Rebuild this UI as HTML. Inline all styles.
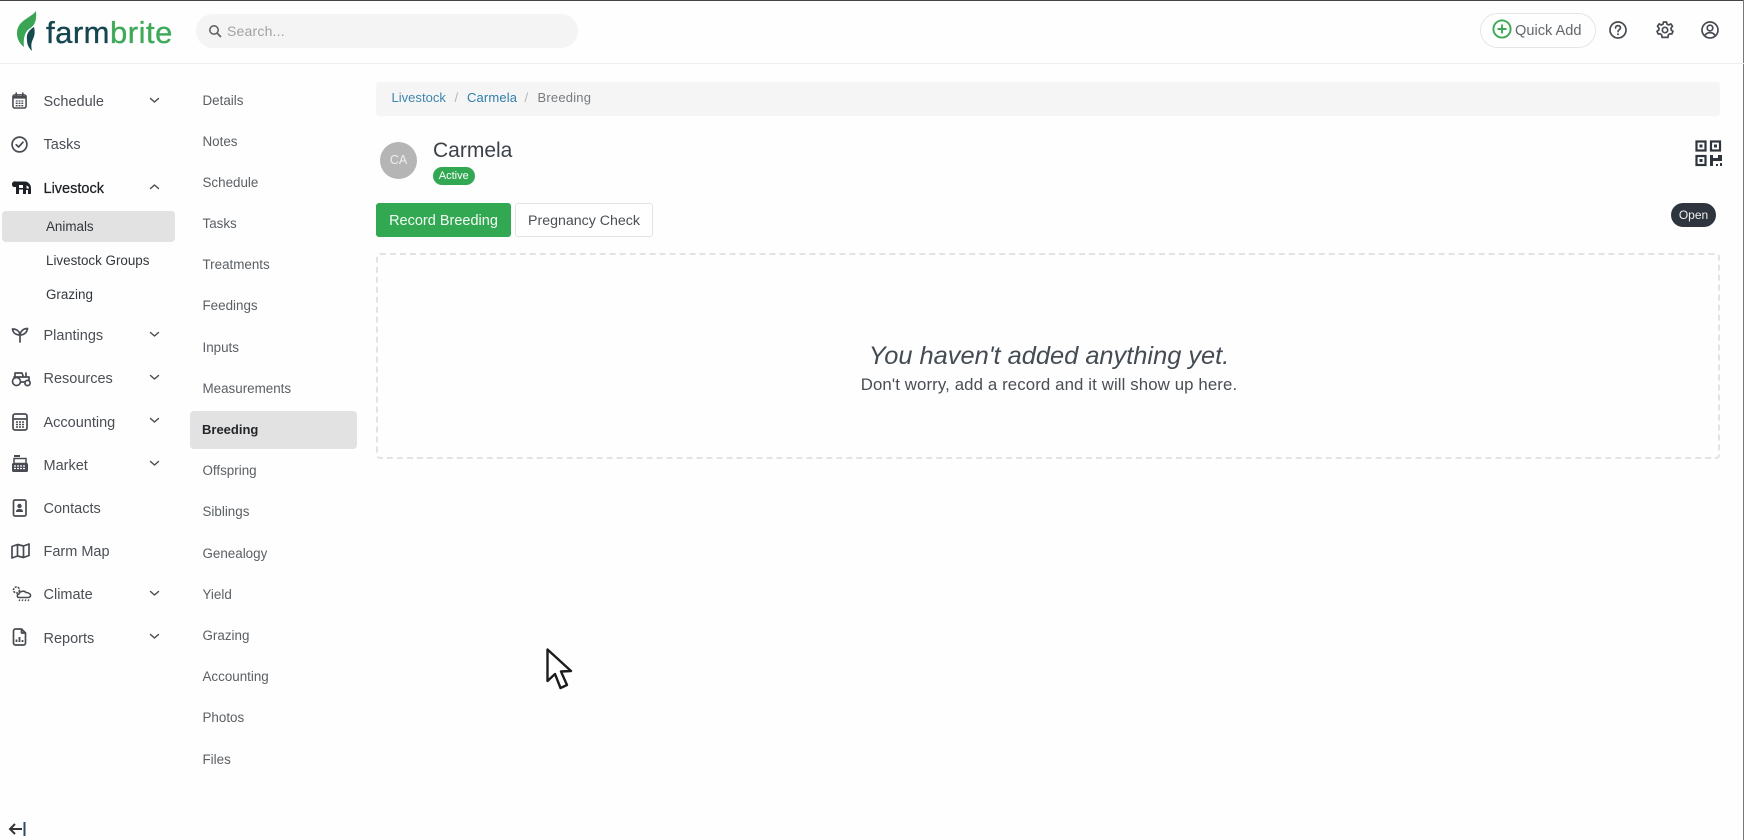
<!DOCTYPE html>
<html><head><meta charset="utf-8"><title>Farmbrite</title>
<style>
html,body{margin:0;padding:0}
body{width:1744px;height:840px;position:relative;overflow:hidden;background:#fefefe;font-family:"Liberation Sans",sans-serif;color:#444b52}
.t{position:absolute;white-space:nowrap;line-height:20px;height:20px}
.m{font-size:14.5px;left:43.5px;color:#4a4f55;margin-top:1px}
.s{font-size:13.4px;left:46px;color:#33383d;margin-top:1px}
.n{font-size:13.4px;left:202.5px;color:#5a5f64;margin-top:2px}
.b{position:absolute}
svg{position:absolute;overflow:visible}
.i{fill:none;stroke:#484c52;stroke-width:1.7;stroke-linecap:round;stroke-linejoin:round}
</style></head><body>
<div class="b" style="left:0;top:0;width:1744px;height:1px;background:#444"></div>
<div class="b" style="left:1743px;top:0;width:1px;height:840px;background:#777"></div>
<div class="b" style="left:0;top:63px;width:1744px;height:1px;background:#efefef"></div>

<svg style="left:15px;top:10px" width="24" height="42" viewBox="0 0 24 42">
<path d="M21 1C16 8 3 10 2 22C1.5 29 5 34 9 37C8 28 10 22 14 19C19 16 22 12 21 1Z" fill="#3aa655"/>
<path d="M19 17C14 20 11 24 12 30C12 35 14 38 17 41C16 36 16 33 18 29C20 25 20 21 19 17Z" fill="#15484f"/>
</svg>
<div class="t" style="left:46px;top:13px;height:40px;line-height:40px;font-size:31px;letter-spacing:.5px;color:#15464f;-webkit-text-stroke:.35px #15464f">farm<span style="color:#3fa95a;-webkit-text-stroke:.35px #3fa95a">brite</span></div>

<div class="b" style="left:196px;top:14px;width:382px;height:34px;border-radius:17px;background:#f4f4f5"></div>
<svg style="left:208px;top:24px" width="14" height="14" viewBox="0 0 14 14"><circle cx="6" cy="6" r="4.2" fill="none" stroke="#666" stroke-width="1.6"/><path d="M9.2 9.2L13 13" stroke="#666" stroke-width="1.8"/></svg>
<div class="t" style="left:227px;top:21px;font-size:14px;color:#a2a2a5;letter-spacing:.2px">Search...</div>

<div class="b" style="left:1480px;top:13px;width:114px;height:33px;border:1px solid #e4e6e6;border-radius:18px"></div>
<svg style="left:1492px;top:19px" width="20" height="20" viewBox="0 0 20 20"><circle cx="10" cy="10" r="8.6" fill="none" stroke="#3aaa55" stroke-width="1.9"/><path d="M10 5.5V14.5M5.5 10H14.5" stroke="#3aaa55" stroke-width="1.9"/></svg>
<div class="t" style="left:1515px;top:21px;font-size:14.6px;color:#62676c">Quick Add</div>
<svg style="left:1609px;top:21px" width="18" height="18" viewBox="0 0 18 18"><circle cx="9" cy="9" r="8" class="i"/><path class="i" d="M6.5 7C6.5 5.5 7.6 4.6 9 4.6S11.5 5.6 11.5 7C11.5 8.7 9 8.8 9 10.6"/><circle cx="9" cy="13.2" r="1" fill="#484c52"/></svg>
<svg style="left:1656px;top:21px" width="18" height="18" viewBox="0 0 18 18"><circle cx="9" cy="9" r="2.7" class="i"/><path class="i" d="M7.5 1H10.5L11 3.2L12.8 4L14.8 2.9L16.5 5.3L15 7L15.2 9L17 10.3L15.8 13L13.6 12.8L12.2 14.2L12 16.4H9H6L5.8 14.2L4.4 12.8L2.2 13L1 10.3L2.8 9L3 7L1.5 5.3L3.2 2.9L5.2 4L7 3.2Z"/></svg>
<svg style="left:1701px;top:21px" width="18" height="18" viewBox="0 0 18 18"><circle cx="9" cy="9" r="8" class="i"/><circle cx="9" cy="7" r="2.8" class="i"/><path class="i" d="M3.8 14.6C5 12.5 6.8 11.6 9 11.6S13 12.5 14.2 14.6"/></svg>

<!-- sidebar icons -->
<svg style="left:12px;top:92px" width="15" height="17" viewBox="0 0 16 18"><rect x="1" y="3" width="14" height="14" rx="2" class="i"/><path class="i" d="M4.5 1V4M11.5 1V4"/><path d="M1 4H15V7H1Z" fill="#484c52"/><path d="M4 9.5h8M4 12h8M4 14.5h8" stroke="#484c52" stroke-width="1.4" stroke-dasharray="2 1"/></svg>
<svg style="left:11px;top:136px" width="17" height="17" viewBox="0 0 17 17"><circle cx="8.5" cy="8.5" r="7.4" class="i"/><path class="i" d="M5.2 8.8L7.6 11L12 6.2"/></svg>
<svg style="left:11px;top:180px" width="21" height="16" viewBox="0 0 21 16"><path d="M1 4C1 2 3 1 5 1.5H14C17 1.5 20 4.5 20 8V14H17V10H15V14H12V9.5H8V14H5V7H3C1.5 7 1 5.5 1 4Z" fill="#1e2226"/><path d="M8 5H12V8H8ZM15.5 5.5C17 6 18 7 18 8.5H15.5Z" fill="#fefefe"/></svg>
<svg style="left:11px;top:327px" width="18" height="16" viewBox="0 0 18 16"><path class="i" d="M9 15V8M9 8C5 8 2 6 1.5 2C5.5 2 8.5 4 9 8ZM9 8C9.5 4 12.5 1.5 16.5 1.5C16 5.5 13 8 9 8Z"/></svg>
<svg style="left:11px;top:369px" width="21" height="18" viewBox="0 0 21 18"><circle cx="5.5" cy="12.5" r="4" class="i"/><circle cx="16.5" cy="14" r="2.6" class="i"/><path class="i" d="M4 8V4H11L12.5 8H18V11.5M10 13H14M15 8V4M3 8H13"/></svg>
<svg style="left:12px;top:413px" width="16" height="18" viewBox="0 0 16 18"><rect x="1" y="1" width="14" height="16" rx="2" class="i"/><path class="i" d="M1 6H15"/><path d="M4 9h8M4 11.5h8M4 14h8" stroke="#484c52" stroke-width="1.5" stroke-dasharray="2 1"/></svg>
<svg style="left:11px;top:455px" width="18" height="18" viewBox="0 0 18 18"><rect x="1" y="8" width="16" height="9" rx="1.5" fill="#484c52"/><rect x="3" y="3.5" width="12" height="5" fill="none" stroke="#484c52" stroke-width="1.5"/><path d="M3 1H9" stroke="#484c52" stroke-width="2"/><path d="M3 11h12M3 13.5h12" stroke="#fefefe" stroke-width="1.2" stroke-dasharray="2 1"/></svg>
<svg style="left:12px;top:499px" width="15" height="18" viewBox="0 0 15 18"><rect x="1.5" y="1" width="12.5" height="16" rx="1.5" class="i"/><circle cx="7.5" cy="7" r="2.2" fill="#484c52"/><path d="M4 13C4 10.5 5.5 10 7.5 10S11 10.5 11 13Z" fill="#484c52"/></svg>
<svg style="left:11px;top:543px" width="19" height="16" viewBox="0 0 19 16"><path class="i" d="M1 3.5L6.5 1.5L12.5 3L18 1V12.5L12.5 14.5L6.5 13L1 15ZM6.5 1.5V13M12.5 3V14.5"/></svg>
<svg style="left:11px;top:585px" width="21" height="18" viewBox="0 0 21 18"><circle cx="5.5" cy="5" r="3" fill="none" stroke="#484c52" stroke-width="1.6" stroke-dasharray="2 1"/><path class="i" d="M8 12.5C6 12.5 5.5 9.5 8 9C8.5 6.5 13 5 15 7.5C18 7.5 20 9.5 19.5 11C19 12.5 18 12.5 17 12.5Z" style="stroke-width:1.5"/><path d="M8 16L9 14.5M11 16L12 14.5M14 16L15 14.5M17 16L18 14.5" stroke="#484c52" stroke-width="1.2"/></svg>
<svg style="left:12px;top:628px" width="15" height="18" viewBox="0 0 15 18"><path class="i" d="M1.5 3A2 2 0 0 1 3.5 1H9.5L13.5 5V15A2 2 0 0 1 11.5 17H3.5A2 2 0 0 1 1.5 15ZM9.5 1V5H13.5"/><path d="M4.5 14V11.5M7.5 14V9M10.5 14V12" stroke="#484c52" stroke-width="1.8"/></svg>

<svg style="left:149px;top:97px" width="11" height="7"><path class="i" d="M1.5 1.5L5.5 5L9.5 1.5" style="stroke-width:1.4"/></svg>
<svg style="left:149px;top:183px" width="11" height="7"><path class="i" d="M1.5 5.5L5.5 2L9.5 5.5" style="stroke-width:1.4"/></svg>
<svg style="left:149px;top:331px" width="11" height="7"><path class="i" d="M1.5 1.5L5.5 5L9.5 1.5" style="stroke-width:1.4"/></svg>
<svg style="left:149px;top:374px" width="11" height="7"><path class="i" d="M1.5 1.5L5.5 5L9.5 1.5" style="stroke-width:1.4"/></svg>
<svg style="left:149px;top:417px" width="11" height="7"><path class="i" d="M1.5 1.5L5.5 5L9.5 1.5" style="stroke-width:1.4"/></svg>
<svg style="left:149px;top:460px" width="11" height="7"><path class="i" d="M1.5 1.5L5.5 5L9.5 1.5" style="stroke-width:1.4"/></svg>
<svg style="left:149px;top:590px" width="11" height="7"><path class="i" d="M1.5 1.5L5.5 5L9.5 1.5" style="stroke-width:1.4"/></svg>
<svg style="left:149px;top:633px" width="11" height="7"><path class="i" d="M1.5 1.5L5.5 5L9.5 1.5" style="stroke-width:1.4"/></svg>

<div class="t m" style="top:91px">Schedule</div>
<div class="t m" style="top:134px">Tasks</div>
<div class="t m" style="top:178px;color:#1d2125;-webkit-text-stroke:.25px #1d2125">Livestock</div>
<div class="b" style="left:2px;top:211px;width:173px;height:31px;border-radius:4px;background:#e2e2e2"></div>
<div class="t s" style="top:216px">Animals</div>
<div class="t s" style="top:250px">Livestock Groups</div>
<div class="t s" style="top:284px">Grazing</div>
<div class="t m" style="top:325px">Plantings</div>
<div class="t m" style="top:368px">Resources</div>
<div class="t m" style="top:412px">Accounting</div>
<div class="t m" style="top:455px">Market</div>
<div class="t m" style="top:498px">Contacts</div>
<div class="t m" style="top:541px">Farm Map</div>
<div class="t m" style="top:584px">Climate</div>
<div class="t m" style="top:628px">Reports</div>

<div class="b" style="left:190px;top:411px;width:167px;height:38px;border-radius:4px;background:#e2e2e2"></div>
<div class="t n" style="top:88.5px">Details</div>
<div class="t n" style="top:130px">Notes</div>
<div class="t n" style="top:171px">Schedule</div>
<div class="t n" style="top:212px">Tasks</div>
<div class="t n" style="top:253px">Treatments</div>
<div class="t n" style="top:294px">Feedings</div>
<div class="t n" style="top:336px">Inputs</div>
<div class="t n" style="top:377px">Measurements</div>
<div class="t n" style="top:418px;left:202px;font-size:13px;color:#23272b;font-weight:bold">Breeding</div>
<div class="t n" style="top:459px">Offspring</div>
<div class="t n" style="top:500px">Siblings</div>
<div class="t n" style="top:542px">Genealogy</div>
<div class="t n" style="top:583px">Yield</div>
<div class="t n" style="top:624px">Grazing</div>
<div class="t n" style="top:665px">Accounting</div>
<div class="t n" style="top:706px">Photos</div>
<div class="t n" style="top:748px">Files</div>

<div class="b" style="left:376px;top:82px;width:1344px;height:34px;border-radius:3px;background:#f5f5f6"></div>
<div class="t" style="left:391.5px;top:88px;font-size:13px;color:#3f86ae;letter-spacing:.02px">Livestock</div>
<div class="t" style="left:454.5px;top:88px;font-size:13px;color:#b5b5b5">/</div>
<div class="t" style="left:467px;top:88px;font-size:13px;letter-spacing:.15px;color:#2f7fa9">Carmela</div>
<div class="t" style="left:524.5px;top:88px;font-size:13px;color:#b5b5b5">/</div>
<div class="t" style="left:537.5px;top:88px;font-size:13px;letter-spacing:.2px;color:#777b7f">Breeding</div>

<div class="b" style="left:380px;top:142px;width:37px;height:37px;border-radius:50%;background:#b5b5b5;color:#eee;font-size:12.5px;line-height:37px;text-align:center">CA</div>
<div class="t" style="left:433px;top:137.5px;height:26px;line-height:26px;font-size:21px;color:#3c4249">Carmela</div>
<div class="b" style="left:432.5px;top:166.5px;width:42.5px;height:18.5px;border-radius:10px;background:#32a852;color:#fff;font-size:11px;line-height:19px;text-align:center">Active</div>

<div class="b" style="left:376px;top:203px;width:135px;height:34px;border-radius:3px;background:#33a852;color:#f4fbf5;font-size:14.5px;line-height:36px;text-align:center">Record Breeding</div>
<div class="b" style="left:515px;top:203px;width:136px;height:32px;border:1px solid #e2e2e2;border-radius:3px;background:#fff;color:#4a4f55;font-size:14.2px;line-height:34px;text-align:center">Pregnancy Check</div>

<svg style="left:1694.5px;top:140px" width="27" height="27" viewBox="0 0 27 27"><g fill="none" stroke="#2f353c" stroke-width="2.2"><rect x="1.5" y="1.5" width="9" height="9"/><rect x="16" y="1.5" width="9" height="9"/><rect x="1.5" y="16" width="9" height="9"/></g><g fill="#2f353c"><rect x="4.5" y="4.5" width="3" height="3"/><rect x="19" y="4.5" width="3" height="3"/><rect x="4.5" y="19" width="3" height="3"/><path d="M15 15H18V18H23V15H27V21H15ZM15 21H18V26H15ZM21 24H23V26H21ZM25 23H27V26H25Z"/></g></svg>

<div class="b" style="left:1671px;top:203px;width:45px;height:24px;border-radius:12px;background:#2f353e;color:#f0f0f0;font-size:12px;line-height:25px;text-align:center">Open</div>

<div class="b" style="left:376px;top:253px;width:1340px;height:202px;border:2px dashed #e3e3e3;border-radius:4px"></div>
<div class="t" style="left:377px;width:1344px;text-align:center;top:340px;height:32px;line-height:32px;font-size:25.4px;font-style:italic;color:#444b52">You haven't added anything yet.</div>
<div class="t" style="left:377px;width:1344px;text-align:center;top:374.5px;font-size:16.8px;letter-spacing:.12px;color:#4a4f55">Don't worry, add a record and it will show up here.</div>

<svg style="left:544px;top:647px" width="30" height="45" viewBox="0 0 30 45"><path d="M3.5 2.5V34L11 27L16.5 41L23 38L17 24.5L27 24Z" fill="#fff" stroke="#1c1c1c" stroke-width="2.4" stroke-linejoin="round"/></svg>

<svg style="left:8px;top:821px" width="19" height="16" viewBox="0 0 19 16"><path d="M16.5 1V15" stroke="#2f4a66" stroke-width="2"/><path d="M14 8H2M7 3L2 8L7 13" fill="none" stroke="#333" stroke-width="2"/></svg>
</body></html>
